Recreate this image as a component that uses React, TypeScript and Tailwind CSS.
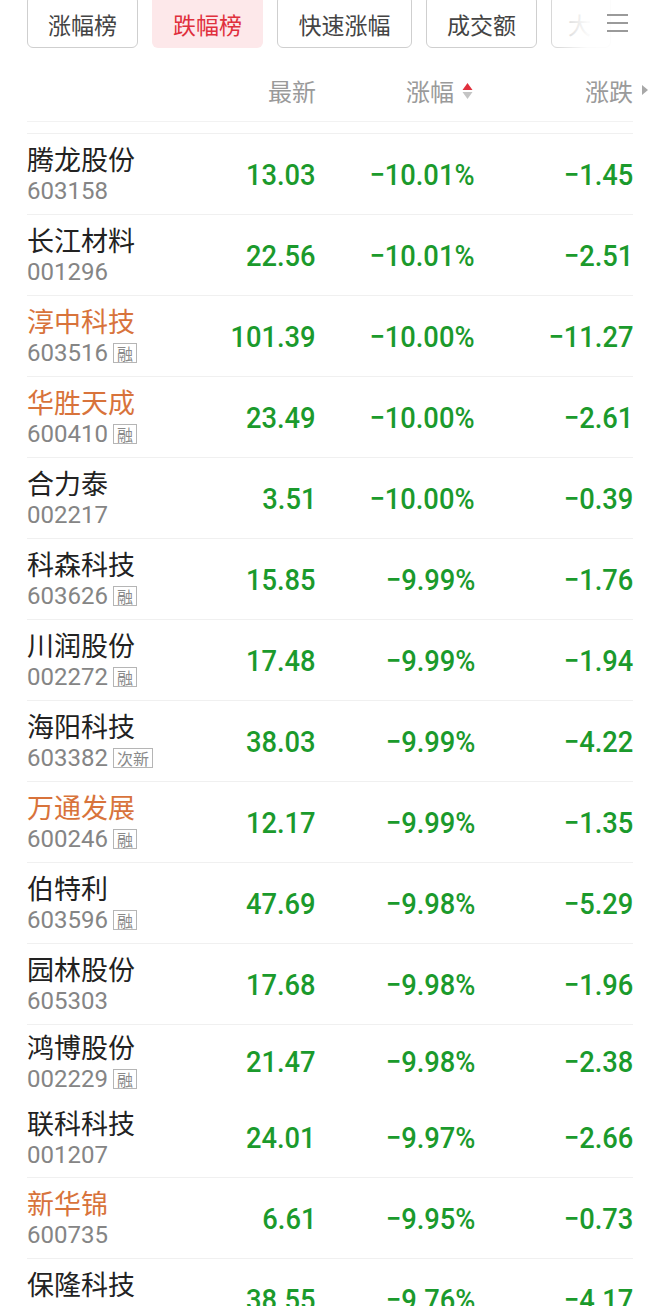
import React from 'react';

// Stock ranking list: falling board tab selected
type Stock = {
  name: string;
  code: string;
  price: string;
  pct: string;
  chg: string;
  orange?: boolean;
  tag?: string;
};

const stocks: Stock[] = [
  { name: '腾龙股份', code: '603158', price: '13.03', pct: '−10.01%', chg: '−1.45' },
  { name: '长江材料', code: '001296', price: '22.56', pct: '−10.01%', chg: '−2.51' },
  { name: '淳中科技', code: '603516', price: '101.39', pct: '−10.00%', chg: '−11.27', orange: true, tag: '融' },
  { name: '华胜天成', code: '600410', price: '23.49', pct: '−10.00%', chg: '−2.61', orange: true, tag: '融' },
  { name: '合力泰', code: '002217', price: '3.51', pct: '−10.00%', chg: '−0.39' },
  { name: '科森科技', code: '603626', price: '15.85', pct: '−9.99%', chg: '−1.76', tag: '融' },
  { name: '川润股份', code: '002272', price: '17.48', pct: '−9.99%', chg: '−1.94', tag: '融' },
  { name: '海阳科技', code: '603382', price: '38.03', pct: '−9.99%', chg: '−4.22', tag: '次新' },
  { name: '万通发展', code: '600246', price: '12.17', pct: '−9.99%', chg: '−1.35', orange: true, tag: '融' },
  { name: '伯特利', code: '603596', price: '47.69', pct: '−9.98%', chg: '−5.29', tag: '融' },
  { name: '园林股份', code: '605303', price: '17.68', pct: '−9.98%', chg: '−1.96' },
  { name: '鸿博股份', code: '002229', price: '21.47', pct: '−9.98%', chg: '−2.38', tag: '融' },
  { name: '联科科技', code: '001207', price: '24.01', pct: '−9.97%', chg: '−2.66' },
  { name: '新华锦', code: '600735', price: '6.61', pct: '−9.95%', chg: '−0.73', orange: true },
  { name: '保隆科技', code: '603197', price: '38.55', pct: '−9.76%', chg: '−4.17' },
];

const tabs = ['涨幅榜', '跌幅榜', '快速涨幅', '成交额'];

const cjk = "font-['Noto_Sans_CJK_SC','Noto_Sans',sans-serif]";
const num =
  "inline-block origin-right scale-x-[0.91] font-['Roboto',sans-serif] text-[30px] font-medium text-[#1b9a2c]";

function Row({ s, idx }: { s: Stock; idx: number }) {
  // row 12 (鸿博) is squeezed with no divider, as in the scrolled capture
  const h =
    idx === 11
      ? 'h-[73px]'
      : idx === 12
        ? 'h-[80px] border-b border-[#f0f0f0]'
        : 'h-[81px] border-b border-[#f0f0f0]';
  return (
    <div className={`flex items-center ${h}`}>
      <div className="flex w-[180px] flex-col">
        <div className={`${cjk} text-[27px] leading-[34px] ${s.orange ? 'text-[#d8733b]' : 'text-[#222]'}`}>
          {s.name}
        </div>
        <div className="flex items-center gap-[5px]">
          <span className="font-['Roboto',sans-serif] text-[24px] leading-[30px] text-[#858585]">{s.code}</span>
          {s.tag && (
            <span
              className={`${cjk} flex h-[20px] items-center border border-[#b5b5b5] px-[3px] text-[16px] leading-none text-[#8a8a8a]`}
            >
              {s.tag}
            </span>
          )}
        </div>
      </div>
      <div className="w-[109px] text-right">
        <span className={num}>{s.price}</span>
      </div>
      <div className="w-[159px] text-right">
        <span className={num}>{s.pct}</span>
      </div>
      <div className="w-[158px] text-right">
        <span className={num}>{s.chg}</span>
      </div>
    </div>
  );
}

export default function App() {
  return (
    <div className="h-[1306px] w-[660px] overflow-hidden bg-white">
      {/* Tabs */}
      <div className="relative mt-[-5px] flex h-[65px] items-start pl-[27px]">
        <div className="flex gap-[14px]">
          {tabs.map((t, i) => (
            <div
              key={t}
              className={`${cjk} flex h-[53px] items-center justify-center rounded-[6px] pt-[5px] text-[23px] ${
                i === 1 ? 'bg-[#fde8ea] text-[#e0303d]' : 'border border-[#cfcfcf] text-[#444]'
              } ${i === 2 ? 'w-[135px]' : 'w-[111px]'}`}
            >
              {t}
            </div>
          ))}
          <div
            className={`${cjk} flex h-[53px] w-[60px] items-center justify-start rounded-[6px] border border-[#d8d8d8] pl-[16px] pt-[5px] text-[23px] text-[#ccc]`}
          >
            大
          </div>
        </div>
        <div className="absolute left-[556px] top-0 h-[60px] w-[104px] bg-gradient-to-r from-white/0 via-white/90 via-30% to-white" />
        <div className="absolute left-[607px] top-[19px] flex w-[21px] flex-col gap-[6px]">
          <div className="h-[2px] bg-[#9a9a9a]" />
          <div className="h-[2px] bg-[#9a9a9a]" />
          <div className="h-[2px] bg-[#9a9a9a]" />
        </div>
      </div>

      <div className="mx-[27px]">
        {/* Header */}
        <div className={`${cjk} flex h-[62px] items-center border-b border-[#f2f2f2] text-[24px] text-[#9a9a9a]`}>
          <div className="w-[180px]" />
          <div className="w-[109px] text-right">最新</div>
          <div className="flex w-[159px] items-center justify-end gap-[8px] pr-[2px]">
            <span>涨幅</span>
            <svg width="11" height="22" viewBox="0 0 11 22">
              <path d="M5.5 3 L10.5 10 L0.5 10 Z" fill="#e0303d" />
              <path d="M0.5 12 L10.5 12 L5.5 19 Z" fill="#c4c4c4" />
            </svg>
          </div>
          <div className="relative w-[158px] text-right">
            涨跌
            <svg width="6" height="10" viewBox="0 0 6 10" className="absolute right-[-15px] top-[12px]">
              <path d="M0 0 L6 5 L0 10 Z" fill="#a8a8a8" />
            </svg>
          </div>
        </div>
        <div className="h-[12px] border-b border-[#f0f0f0]" />

        {stocks.map((s, i) => (
          <Row key={s.code} s={s} idx={i} />
        ))}
      </div>
    </div>
  );
}
